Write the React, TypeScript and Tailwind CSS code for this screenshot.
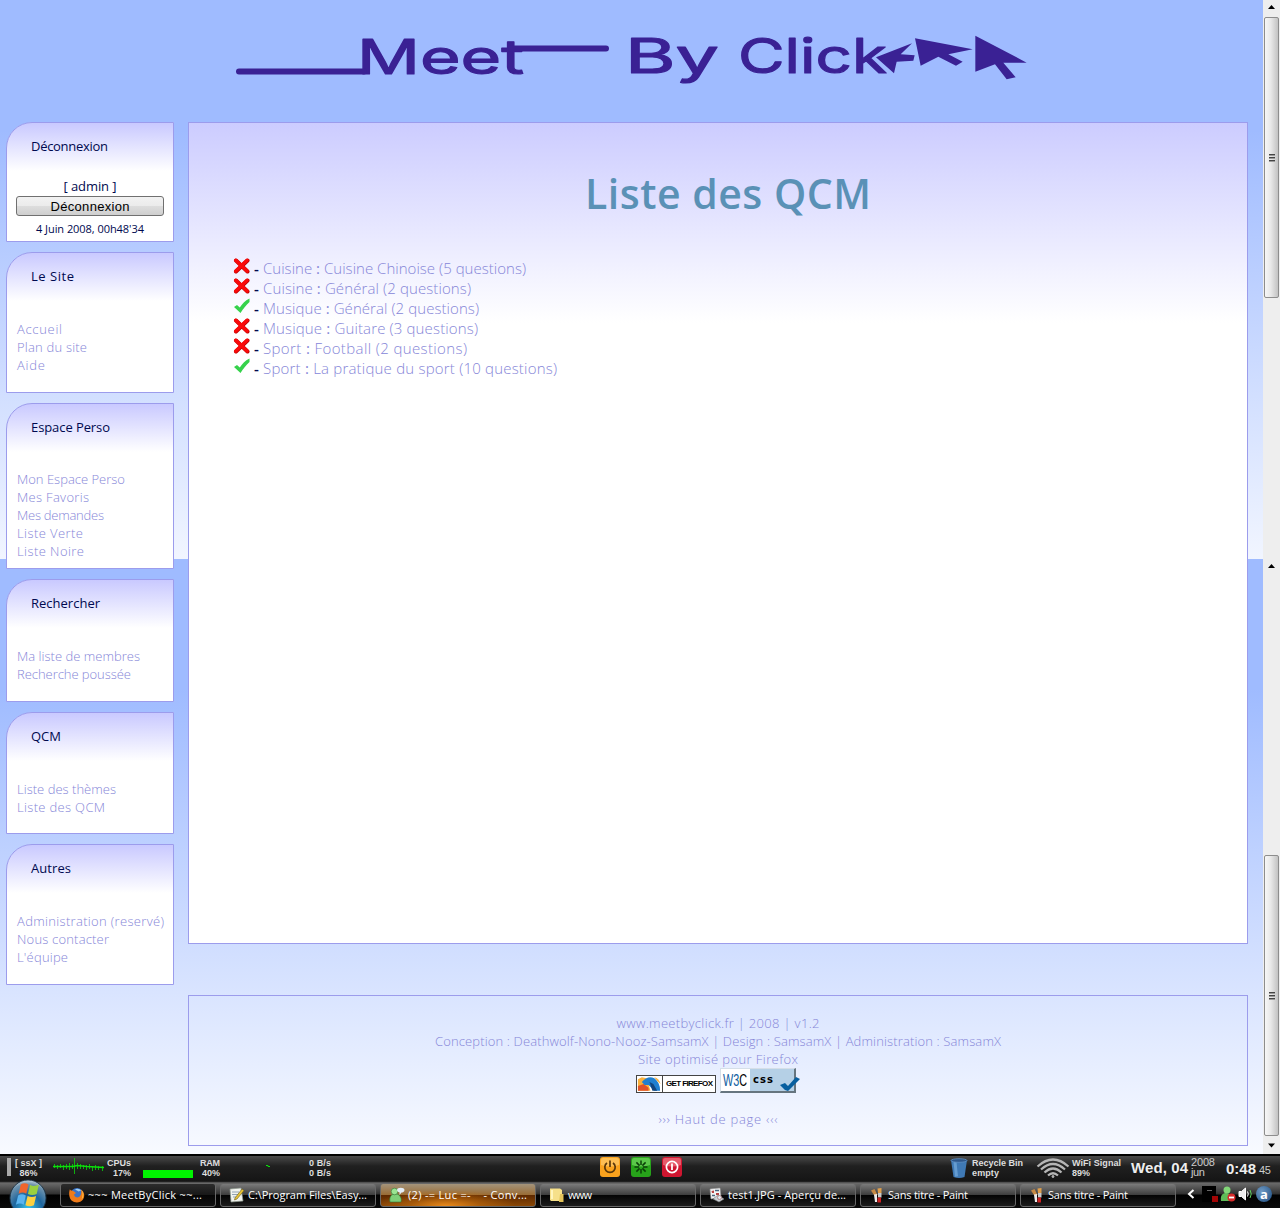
import React, { useLayoutEffect, useRef, useState } from "react";

/** Single line of text whose tracking is adjusted so that it fills `w` pixels. */
function Fit({ w, className = "", children }: { w: number; className?: string; children: React.ReactNode }) {
  const ref = useRef<HTMLSpanElement>(null);
  const [spacing, setSpacing] = useState(0);
  useLayoutEffect(() => {
    const el = ref.current;
    if (!el) return;
    const n = (el.textContent || "").length;
    if (n > 1) setSpacing((w - el.getBoundingClientRect().width) / (n - 1));
  }, [w]);
  return (
    <span className={"inline-block whitespace-pre " + className} style={{ width: w }}>
      <span ref={ref} style={{ letterSpacing: spacing }}>
        {children}
      </span>
    </span>
  );
}

type Item = [string, number];

const boxes: { title: Item; height: string; gap: string; links: Item[] }[] = [
  { title: ["Le Site", 43], height: "h-[141px]", gap: "mt-[35px]", links: [["Accueil", 45], ["Plan du site", 70], ["Aide", 28]] },
  {
    title: ["Espace Perso", 79],
    height: "h-[166px]",
    gap: "mt-[34px]",
    links: [["Mon Espace Perso", 108], ["Mes Favoris", 72], ["Mes demandes", 87], ["Liste Verte", 66], ["Liste Noire", 67]],
  },
  { title: ["Rechercher", 69], height: "h-[123px]", gap: "mt-[35px]", links: [["Ma liste de membres", 123], ["Recherche poussée", 114]] },
  { title: ["QCM", 30], height: "h-[122px]", gap: "mt-[35px]", links: [["Liste des thèmes", 99], ["Liste des QCM", 88]] },
  {
    title: ["Autres", 40],
    height: "h-[141px]",
    gap: "mt-[35px]",
    links: [["Administration (reservé)", 147], ["Nous contacter", 92], ["L'équipe", 51]],
  },
];

const quizzes: { ok: boolean; theme: string; name: string; w: number }[] = [
  { ok: false, theme: "Cuisine", name: "Cuisine Chinoise (5 questions)", w: 263 },
  { ok: false, theme: "Cuisine", name: "Général (2 questions)", w: 208 },
  { ok: true, theme: "Musique", name: "Général (2 questions)", w: 216 },
  { ok: false, theme: "Musique", name: "Guitare (3 questions)", w: 215 },
  { ok: false, theme: "Sport", name: "Football (2 questions)", w: 204 },
  { ok: true, theme: "Sport", name: "La pratique du sport (10 questions)", w: 294 },
];

function Logo() {
  return (
    <svg className="block h-[122px] w-[1263px]" viewBox="0 0 1263 122" fill="#3a2194">
      <g
        fontFamily="Inter, 'Liberation Sans', sans-serif"
        fontSize="48"
        fontWeight="400"
        stroke="#3a2194"
        strokeWidth="1.1"
        strokeLinejoin="round"
      >
        <text x="357" y="73.500" textLength="167" lengthAdjust="spacingAndGlyphs">Meet</text>
        <text x="625" y="72.500" textLength="94" lengthAdjust="spacingAndGlyphs">By</text>
        <text x="738" y="72.500" textLength="149" lengthAdjust="spacingAndGlyphs">Click</text>
      </g>
      <path d="M239 71.500H364M511 48.500H606" stroke="#3a2194" strokeWidth="6" strokeLinecap="round" />
      <g transform="translate(620 20) scale(.33333)">
        <path d="M768 112L876 70L842 103L884 106L880 122L830 125L822 160Z" />
        <path d="M885 55L1058 88L985 103L1028 125L1008 137L955 110L902 137Z" />
        <path d="M1066 47L1220 128L1150 128L1187 172L1160 178L1125 133L1066 155Z" />
      </g>
    </svg>
  );
}

function SideBox({ title, height, children }: { title: Item; height: string; children: React.ReactNode }) {
  return (
    <section
      className={
        "w-[168px] shrink-0 overflow-hidden rounded-tl-[26px] border border-[#9c9cec] bg-white bg-[linear-gradient(to_bottom,#c9c9ff_0px,#ffffff_48px)] pt-[14px] " +
        height
      }
    >
      <h2 className="ml-6 h-[18px] text-[13px] font-normal leading-[18px] text-[#00094f]">
        <Fit w={title[1]}>{title[0]}</Fit>
      </h2>
      {children}
    </section>
  );
}

function Cross() {
  return (
    <svg className="ml-[-1px] h-4 w-[17px]" viewBox="0 0 17 16">
      <path d="M3 2.500L14.500 13.500M14.500 2.500L3 13.500" stroke="#c00000" strokeWidth="4" strokeLinecap="round" />
      <path d="M2.800 2.300L14 13M14 2.300L2.800 13" stroke="#fa0a0a" strokeWidth="3.400" strokeLinecap="round" />
    </svg>
  );
}

function Tick() {
  return (
    <svg className="ml-[-1px] h-4 w-[17px]" viewBox="0 0 17 16">
      <path d="M1 9L4 7L6.800 9.500C9 6 12 2.500 16.500 .5V4C13 7.500 10 10.500 7.500 15Z" fill="#35d24b" />
    </svg>
  );
}

function ScrollThumb() {
  return (
    <div className="ml-px flex h-[281px] w-[15px] shrink-0 flex-col items-center justify-center gap-px rounded-[2px] border border-[#8d8d8d] bg-[linear-gradient(to_right,#f7f7f7,#e8e8e8_45%,#c2c2c2)]">
      <i className="block h-[2px] w-[6px] border-t border-[#444] bg-[#999]" />
      <i className="block h-[2px] w-[6px] border-t border-[#444] bg-[#999]" />
      <i className="block h-[2px] w-[6px] border-t border-[#444] bg-[#999]" />
    </div>
  );
}

function Arrow({ down = false }: { down?: boolean }) {
  return (
    <svg className="h-[17px] w-[17px] shrink-0" viewBox="0 0 17 17">
      <path d={down ? "M5 7.500H12L8.500 11.500Z" : "M5 9H12L8.500 5Z"} fill="#000" />
    </svg>
  );
}

function FirefoxIcon() {
  return (
    <svg className="h-4 w-4" viewBox="0 0 16 16">
      <circle cx="8" cy="7.500" r="6.500" fill="#3b74c9" />
      <path d="M6 2.500C8 1 11 2 12 3.500L9.500 4.500L8 3.500Z" fill="#9fd0f5" />
      <path d="M1 2C1 4 3 3 5 4.500L7 6L5 7.500C5.500 10 8 11 10 10C12.500 8.500 12.500 5 12 2.500C15 4.500 16.500 9 14 12.500C11.500 16 6 16.500 2.500 13.500C-.5 10.500-.2 5 1 2Z" fill="#ef7b1a" />
      <path d="M12.500 3C15 6 15 10 12.500 12.500C14 9 14 6 12.500 3Z" fill="#ffd54a" />
    </svg>
  );
}
function NoteIcon() {
  return (
    <svg className="h-4 w-4" viewBox="0 0 16 16">
      <path d="M1 2L12 1L14 14L2 15Z" fill="#f1f3ee" stroke="#8e9a8e" strokeWidth=".7" />
      <path d="M3 5H10M3 7.500H9M4 10H8" stroke="#93a3b4" />
      <path d="M6 11L13 2L15 3.500L8 12L5.500 13Z" fill="#e8c437" stroke="#6a5a1b" strokeWidth=".6" />
    </svg>
  );
}
function BuddyIcon() {
  return (
    <svg className="h-4 w-4" viewBox="0 0 16 16">
      <path d="M1 15C0 10 2.500 7.500 4 7.500L8 7C11 8 13 11 12 15Z" fill="#7fcf78" stroke="#307b37" strokeWidth=".6" />
      <circle cx="5.500" cy="4.500" r="3.300" fill="#9be492" stroke="#307b37" strokeWidth=".6" />
      <path d="M8 3C8 0 15.500 0 15.500 3C15.500 5 13.500 5.500 12.500 5.500L10.500 8V5.200C9 5 8 4.300 8 3Z" fill="#e4edf6" />
    </svg>
  );
}
function FolderIcon() {
  return (
    <svg className="h-4 w-4" viewBox="0 0 16 16">
      <path d="M1 1.500H11L13 3V14H2L1 13Z" fill="#f6e08a" />
      <path d="M11 7H14.500V15H10Z" fill="#e4c45b" />
      <path d="M3 3V12" stroke="#fff5bd" strokeWidth="2" />
    </svg>
  );
}
function PreviewIcon() {
  return (
    <svg className="h-4 w-4" viewBox="0 0 16 16">
      <path d="M1 2L11 1L12 10L2 12Z" fill="#f4f4f4" stroke="#9a9a9a" strokeWidth=".6" />
      <path d="M2.500 4L5 3.500V6H3ZM7 6H10V8H7Z" fill="#b74343" />
      <path d="M6 3.500H10M3 8.500H6" stroke="#4a647c" strokeWidth="1.500" />
      <path d="M4 12L9 8L15 12L10 15Z" fill="#cbd1d6" stroke="#777" strokeWidth=".6" />
      <circle cx="10.500" cy="10.500" r="2" fill="#dfe9f1" stroke="#a77" strokeWidth=".8" />
    </svg>
  );
}
function PaintIcon() {
  return (
    <svg className="h-4 w-4" viewBox="0 0 16 16">
      <path d="M2 3.500L5.500 2L8.500 8L6 9.500Z" fill="#c98b45" />
      <path d="M8.500 1.500L12.500 1V6H9Z" fill="#e0a04d" />
      <path d="M5 7.500L8 7V15H6Z" fill="#eee" />
      <path d="M9 6H12.500V10.500H9Z" fill="#c9c9c9" />
      <path d="M8.500 10.500H12V15.500H8.500Z" fill="#d02020" />
    </svg>
  );
}

const glass = "bg-[linear-gradient(to_bottom,#7b7b7b,#3c3c3c_50%,#030303_51%,#1c1c1c)]";

const tasks: { icon: React.ReactNode; label: string; w: number; tone: string }[] = [
  { icon: <FirefoxIcon />, label: "~~~ MeetByClick ~~...", w: 114, tone: "bg-[linear-gradient(to_bottom,#2c2c2c,#171717_50%,#050505_51%,#111)]" },
  { icon: <NoteIcon />, label: "C:\\Program Files\\Easy...", w: 119, tone: glass },
  {
    icon: <BuddyIcon />,
    label: "(2) -= Luc =-    - Conv...",
    w: 119,
    tone: "bg-[radial-gradient(ellipse_70px_16px_at_42%_100%,#e98a1c,#c8700f88_50%,transparent),linear-gradient(to_bottom,#a3937b,#9a6c34_50%,#5d2800_51%,#8a4806)]",
  },
  { icon: <FolderIcon />, label: "www", w: 24, tone: glass },
  { icon: <PreviewIcon />, label: "test1.JPG - Aperçu de...", w: 118, tone: glass },
  { icon: <PaintIcon />, label: "Sans titre - Paint", w: 80, tone: glass },
  { icon: <PaintIcon />, label: "Sans titre - Paint", w: 80, tone: glass },
];

function StartOrb() {
  return (
    <svg className="relative z-10 ml-[9px] mt-[-2px] h-[38px] w-[38px] shrink-0" viewBox="0 0 40 40">
      <defs>
        <radialGradient id="orb" cx=".5" cy=".8" r=".8">
          <stop offset="0" stopColor="#35c5ef" />
          <stop offset=".5" stopColor="#1e659d" />
          <stop offset=".85" stopColor="#6f93ad" />
          <stop offset="1" stopColor="#c5d5e0" />
        </radialGradient>
      </defs>
      <circle cx="20" cy="20" r="19" fill="url(#orb)" stroke="#1a3042" />
      <g transform="translate(-2.500 -4) scale(1.150)">
        <path d="M13 8.500C15.500 6.800 18 7.300 20 8.500L18 17C16 15.700 13.500 15.500 11 17Z" fill="#f0652d" />
        <path d="M21.500 9C24 10.300 27 10 29.500 8.800L27.500 17.300C25 18.500 22 18.500 19.500 17.300Z" fill="#9ad03f" />
        <path d="M10.500 18.500C13 17 15.500 17.300 17.600 18.500L15.600 27C13.500 25.800 11 25.500 8.500 27Z" fill="#5ab4f0" />
        <path d="M19.200 19C21.500 20.300 24.500 20.300 27 19L25 27.500C22.500 28.700 19.500 28.700 17.200 27.500Z" fill="#fdd03f" />
      </g>
    </svg>
  );
}

function WidgetPair({ a, aw, b, bw, className = "" }: { a: string; aw: number; b: string; bw: number; className?: string }) {
  return (
    <div className={"flex flex-col text-[9px] font-bold leading-[10px] text-[#dedede] " + className}>
      <Fit w={aw}>{a}</Fit>
      <Fit w={bw}>{b}</Fit>
    </div>
  );
}

function WidgetBar() {
  return (
    <div className="flex h-[27px] items-start border-t-2 border-black bg-[linear-gradient(to_bottom,#4a4a4a,#202020_40%,#151515)] pl-px pt-[2px] font-['Liberation_Sans',sans-serif]">
      <div className="ml-[6px] h-[18px] w-1 bg-[#a9a9a9]" />
      <WidgetPair a="[ ssX ]" aw={27} b="86%" bw={18} className="ml-1 w-[27px] items-center" />
      <svg className="ml-[11px] h-5 w-[51px]" viewBox="0 0 51 20" fill="none" stroke="#0be00b">
        <path d="M0 8.500H20L24 7.500L34 8.500L51 9.500" strokeWidth="1.500" />
        <path d="M1.500 6V10M4.500 7V11M7.500 6V10M10.500 7V12M13.500 6V11M16.500 5V12M19.500 6V11M21.500 0V16M24.500 5V11M27.500 6V11M30.500 7V11M33.500 7V12M36.500 6V11M39.500 8V13M42.500 7V12M45.500 8V12M49.500 8V13" strokeOpacity=".75" />
      </svg>
      <WidgetPair a="CPUs" aw={24} b="17%" bw={18} className="ml-[3px] w-6 items-end" />
      <div className="ml-[12px] mt-[12px] h-2 w-[50px] bg-[#00f400]" />
      <WidgetPair a="RAM" aw={20} b="40%" bw={18} className="ml-[5px] w-[22px] items-end" />
      <svg className="ml-[46px] h-5 w-1" viewBox="0 0 4 20">
        <path d="M0 7.500H2V8.500H4" stroke="#0be00b" fill="none" />
      </svg>
      <WidgetPair a="0 B/s" aw={22} b="0 B/s" bw={22} className="ml-[39px] w-[22px]" />
      <div className="ml-[269px] mt-[-1px] flex gap-[11px]">
        <svg className="h-5 w-5" viewBox="0 0 20 20" fill="none">
          <rect width="20" height="20" rx="3" fill="#f9a21d" />
          <path d="M1 3Q1 1 3 1H17Q19 1 19 3V8Q10 11 1 8Z" fill="#ffd078" opacity=".6" />
          <path d="M7 6A5.200 5.200 0 1 0 13 6M10 3.500V10" stroke="#59370a" strokeWidth="1.700" />
        </svg>
        <svg className="h-5 w-5" viewBox="0 0 20 20" fill="none">
          <rect width="20" height="20" rx="3" fill="#27a31a" />
          <path d="M1 3Q1 1 3 1H17Q19 1 19 3V8Q10 11 1 8Z" fill="#7ee06b" opacity=".6" />
          <path d="M10 3.500V8M10 12V16.500M3.500 10H8M12 10H16.500M5.400 5.400L8.600 8.600M11.400 11.400L14.600 14.600M14.600 5.400L11.400 8.600M8.600 11.400L5.400 14.600" stroke="#0b4008" strokeWidth="1.500" />
        </svg>
        <svg className="h-5 w-5" viewBox="0 0 20 20" fill="none">
          <rect width="20" height="20" rx="3" fill="#cf1630" />
          <path d="M1 3Q1 1 3 1H17Q19 1 19 3V8Q10 11 1 8Z" fill="#f58a93" opacity=".6" />
          <circle cx="10" cy="10" r="5.600" stroke="#fff" strokeWidth="1.700" />
          <path d="M10 6.500V13" stroke="#fff" strokeWidth="1.800" />
        </svg>
      </div>
      <svg className="ml-[268px] h-5 w-[18px]" viewBox="0 0 18 20">
        <path d="M1 2H17L14.500 19Q9 21 3.500 19Z" fill="#3f79b5" />
        <path d="M5 4L6.500 18.500" stroke="#6fa5d8" strokeWidth="3" opacity=".8" />
        <ellipse cx="9" cy="2.500" rx="8" ry="1.800" fill="#2d568a" stroke="#5f90c4" strokeWidth=".8" />
      </svg>
      <WidgetPair a="Recycle Bin" aw={51} b="empty" bw={27} className="ml-[4px] w-[51px]" />
      <svg className="ml-[13px] h-5 w-[34px]" viewBox="0 0 34 20" fill="none" stroke="#b5b5b5" strokeWidth="2.200">
        <path d="M1.500 8.500Q17-5.500 32.500 8.500M5 11.500Q17 .5 29 11.500M8.500 14.500Q17 6.500 25.500 14.500M12 17.500Q17 13 22 17.500" />
        <circle cx="17" cy="18.500" r="1" fill="#b5b5b5" strokeWidth="1" />
      </svg>
      <WidgetPair a="WiFi Signal" aw={49} b="89%" bw={18} className="ml-[2px] w-[49px]" />
      <Fit w={57} className="ml-[10px] text-[15px] font-bold leading-[20px] text-[#eee]">Wed, 04</Fit>
      <div className="ml-[3px] mt-[-1px] flex w-6 flex-col text-[11px] leading-[10px] text-[#ccc]">
        <Fit w={24}>2008</Fit>
        <Fit w={14}>jun</Fit>
      </div>
      <Fit w={30} className="ml-[11px] text-[15px] font-bold leading-[21px] text-[#eee]">0:48</Fit>
      <Fit w={12} className="ml-[3px] text-[11px] leading-[25px] text-[#ccc]">45</Fit>
    </div>
  );
}

function Taskbar() {
  return (
    <div className="flex h-[27px] items-start bg-[linear-gradient(to_bottom,#070707_0,#6b6b6b_2px,#303030_13px,#000_14px,#0a0a0a)] font-['Open_Sans','Liberation_Sans',sans-serif]">
      <StartOrb />
      <div className="ml-[13px] mt-[2px] flex gap-1">
        {tasks.map((t, i) => (
          <div key={i} className={"flex h-6 w-[156px] items-center rounded-[3px] border border-[#686868] pl-2 " + t.tone}>
            {t.icon}
            <Fit w={t.w} className="ml-[3px] text-[11px] leading-[20px] text-white">{t.label}</Fit>
          </div>
        ))}
      </div>
      <div className="ml-[11px] mt-[5px] flex items-center">
        <svg className="h-4 w-[8px]" viewBox="0 0 8 16">
          <path d="M6.500 4L2 8L6.500 12" stroke="#fff" strokeWidth="2" fill="none" />
        </svg>
        <svg className="ml-[7px] h-4 w-4" viewBox="0 0 16 16">
          <rect width="14" height="16" fill="#000" />
          <path d="M5 4.500H10" stroke="#666" />
          <rect x="10" y="10" width="6" height="6" fill="#a30505" />
        </svg>
        <svg className="ml-[2px] h-4 w-4" viewBox="0 0 16 16">
          <path d="M1 15C0 9 3 7 6 7S13 10 12 15Z" fill="#5fbb58" />
          <circle cx="7" cy="4" r="3.500" fill="#82d778" />
          <circle cx="11.500" cy="11.500" r="4" fill="#d92b2b" />
          <path d="M9 11.500H14" stroke="#fff" strokeWidth="1.800" />
        </svg>
        <svg className="ml-[2px] h-4 w-4" viewBox="0 0 16 16" fill="none" stroke="#fff">
          <path d="M1 5.500H3.500L7.500 2V14L3.500 10.500H1Z" fill="#eee" />
          <path d="M9.500 5.500Q11 8 9.500 10.500" />
          <path d="M12 4Q14.500 8 12 12" stroke="#5ed15e" />
        </svg>
        <span className="ml-[2px] flex h-4 w-4 items-center justify-center rounded-full bg-[radial-gradient(circle_at_35%_35%,#6f9ac4,#1b4a7d)] text-[13px] font-bold leading-none text-white">
          a
        </span>
      </div>
    </div>
  );
}

export default function App() {
  return (
    <div className="flex h-[1208px] w-[1280px] flex-col overflow-hidden font-['Comic_Sans_MS','Open_Sans',sans-serif]">
      <div className="flex h-[1154px] shrink-0">
        <div className="w-[1263px] shrink-0 bg-[linear-gradient(to_bottom,#9fbbff_0px,#9fbbff_130px,#f8faff_595px),linear-gradient(to_bottom,#9fbbff_0px,#9fbbff_130px,#f8faff_595px)] bg-[size:100%_559px,100%_595px] bg-[position:0_0,0_559px] bg-no-repeat">
          <header>
            <Logo />
          </header>
          <div className="flex gap-[14px] pl-[6px]">
            <nav className="flex flex-col gap-[10px]">
              <SideBox title={["Déconnexion", 77]} height="h-[120px]">
                <div className="mt-[22px] flex flex-col items-center text-[#00094f]">
                  <Fit w={53} className="h-[18px] text-[13px] leading-[18px]">[ admin ]</Fit>
                  <button className="mt-px flex h-[20px] w-[148px] items-center justify-center rounded-[3px] border border-[#707070] bg-[linear-gradient(to_bottom,#f2f2f2,#ebebeb_50%,#dddddd_51%,#cfcfcf)] font-['Liberation_Sans',sans-serif] text-[13px] leading-none text-black">
                    <Fit w={79}>Déconnexion</Fit>
                  </button>
                  <Fit w={108} className="mt-[5px] h-[16px] text-[11px] leading-[16px]">4 Juin 2008, 00h48'34</Fit>
                </div>
              </SideBox>
              {boxes.map((b) => (
                <SideBox key={b.title[0]} title={b.title} height={b.height}>
                  <ul className={"ml-[10px] " + b.gap}>
                    {b.links.map(([label, w]) => (
                      <li key={label} className="h-[18px] text-[13px] font-light leading-[18px] text-[#8686d8]">
                        <Fit w={w}>{label}</Fit>
                      </li>
                    ))}
                  </ul>
                </SideBox>
              ))}
            </nav>
            <div className="flex w-[1060px] flex-col gap-[51px]">
              <main className="h-[822px] border border-[#9c9cec] bg-white bg-[linear-gradient(to_bottom,#ccccff_0px,#ffffff_200px)]">
                <h1 className="ml-[396px] mt-[40px] h-[60px] text-[41px] font-semibold leading-[60px] text-[#5a91b6]">
                  <Fit w={286}>Liste des QCM</Fit>
                </h1>
                <ul className="ml-[45px] mt-[35px]">
                  {quizzes.map((q) => (
                    <li key={q.theme + q.name} className="flex h-5 text-[15px] font-light leading-[20px] text-[#8686d8]">
                      {q.ok ? <Tick /> : <Cross />}
                      <span className="ml-1 w-[9px] font-semibold text-[#00094f]">-</span>
                      <Fit w={q.w}>
                        {q.theme} <b>:</b> {q.name}
                      </Fit>
                    </li>
                  ))}
                </ul>
              </main>
              <footer className="flex h-[151px] flex-col items-center border border-[#9c9cec] pt-[18px] text-[13px] font-light leading-[18px] text-[#8686d8]">
                <Fit w={203} className="h-[18px]">www.meetbyclick.fr | 2008 | v1.2</Fit>
                <Fit w={566} className="h-[18px]">
                  Conception : Deathwolf-Nono-Nooz-SamsamX | Design : SamsamX | Administration : SamsamX
                </Fit>
                <Fit w={160} className="h-[18px]">Site optimisé pour Firefox</Fit>
                <div className="flex h-[25px] items-end gap-1">
                  <div className="flex h-[18px] w-20 border border-[#444] bg-white">
                    <svg className="h-4 w-[26px] border-r border-[#444]" viewBox="0 0 26 16">
                      <rect width="26" height="16" fill="#fff" />
                      <path d="M1 15V3L5 1L10 2L14 15Z" fill="#f9b03c" />
                      <path d="M1 10L7 8L12 12V15H1Z" fill="#e0522a" />
                      <path d="M5 6Q11-1 18 2Q24 6 24 15H18L12 9L8 9Z" fill="#1f7fd0" />
                      <path d="M18 1Q23 2 24.500 8L21 5Z" fill="#f9b03c" />
                      <path d="M13 6L17 8L21 15H16Z" fill="#12457e" />
                    </svg>
                    <Fit w={47} className="ml-[3px] font-['Liberation_Sans',sans-serif] text-[8px] font-bold leading-[16px] text-black">
                      GET FIREFOX
                    </Fit>
                  </div>
                  <div className="relative mr-[4px] flex h-[25px] w-[76px] border border-b-2 border-r-2 border-[#d5dfe8] border-b-[#66757f] border-r-[#66757f] bg-[#b5d0e6]">
                    <svg
                      className="h-[22px] w-[29px] shrink-0 bg-white"
                      viewBox="0 0 29 22"
                      fontFamily="'Liberation Sans', sans-serif"
                      fontSize="17"
                      fontWeight="400"
                    >
                      <text x="2" y="17" textLength="24" lengthAdjust="spacingAndGlyphs" fill="#10609f">
                        W3<tspan fill="#000">C</tspan>
                      </text>
                    </svg>
                    <Fit w={20} className="ml-[3px] font-['DejaVu_Sans',sans-serif] text-[10px] font-bold leading-[21px] text-black">css</Fit>
                    <svg className="absolute left-[51px] top-[7px] h-[17px] w-7" viewBox="0 0 28 17">
                      <path d="M8 9L13 7L16 10L24 1L28 3L16 15L13 14Z" fill="#075f9f" />
                    </svg>
                  </div>
                </div>
                <Fit w={119} className="mt-[17px] h-[18px]">{"››› Haut de page ‹‹‹"}</Fit>
              </footer>
            </div>
          </div>
        </div>
        <div className="flex w-[17px] flex-col bg-[#eeeeee]">
          <Arrow />
          <ScrollThumb />
          <div className="h-[261px]" />
          <Arrow />
          <div className="h-[279px]" />
          <ScrollThumb />
          <Arrow down />
        </div>
      </div>
      <WidgetBar />
      <Taskbar />
    </div>
  );
}
